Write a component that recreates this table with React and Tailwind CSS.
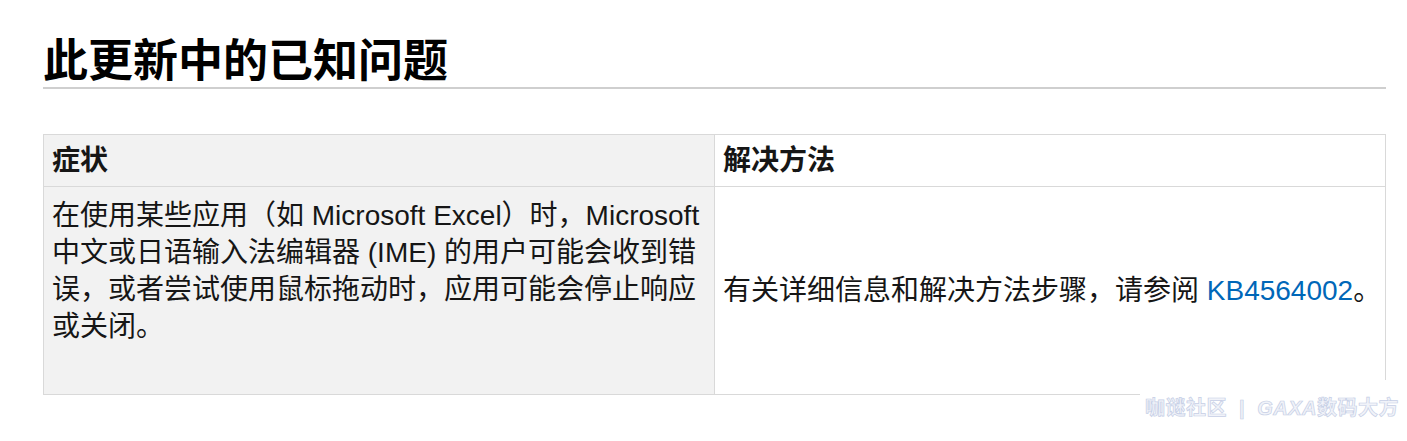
export default function App() {
  return (
    <div
      className="relative min-h-[441px] w-[1407px] bg-white text-[#161616]"
      style={{ fontFamily: '"Segoe UI", "Liberation Sans", "Noto Sans CJK SC", sans-serif' }}
    >
      <div className="ml-[43px] w-[1343px] pt-[29px]">
        <h1
          className="border-b-2 border-[#cfcfcf] text-[45px] font-bold leading-[58px] text-black"
          style={{ fontFamily: '"Noto Sans CJK SC", sans-serif' }}
        >
          此更新中的已知问题
        </h1>

        <table className="mt-[45px] w-full table-fixed border-collapse text-[28px] leading-[37px]">
          <thead>
            <tr className="h-[52px]">
              <th className="w-[671px] border border-[#d9d9d9] bg-[#f2f2f2] px-2 text-left font-bold">症状</th>
              <th className="border border-[#d9d9d9] bg-white px-2 text-left font-bold">解决方法</th>
            </tr>
          </thead>
          <tbody>
            <tr className="h-[208px]">
              <td className="whitespace-nowrap border border-[#d9d9d9] bg-[#f2f2f2] px-2 pt-[10px] align-top">
                在使用某些应用（如 Microsoft Excel）时，Microsoft
                <br />
                中文或日语输入法编辑器 (IME) 的用户可能会收到错
                <br />
                误，或者尝试使用鼠标拖动时，应用可能会停止响应
                <br />
                或关闭。
              </td>
              <td className="whitespace-nowrap border border-[#d9d9d9] bg-white px-2 align-middle">
                有关详细信息和解决方法步骤，请参阅{' '}
                <a href="#" className="text-[#0067b8]">KB4564002</a>。
              </td>
            </tr>
          </tbody>
        </table>
      </div>

      {/* watermark */}
      <div className="absolute left-[1140px] top-[380px] flex h-[61px] w-[267px] items-start bg-white pl-[5px] pt-[15px]">
        <span
          className="whitespace-nowrap text-[20px] font-bold leading-[26px] tracking-[0.5px] text-[#f1f3f9]"
          style={{ WebkitTextStroke: '0.7px #c6cfe6' }}
        >
          咖谜社区 <span className="mx-[6px]">|</span> <span className="italic">GAXA</span>数码大方
        </span>
      </div>
    </div>
  )
}
